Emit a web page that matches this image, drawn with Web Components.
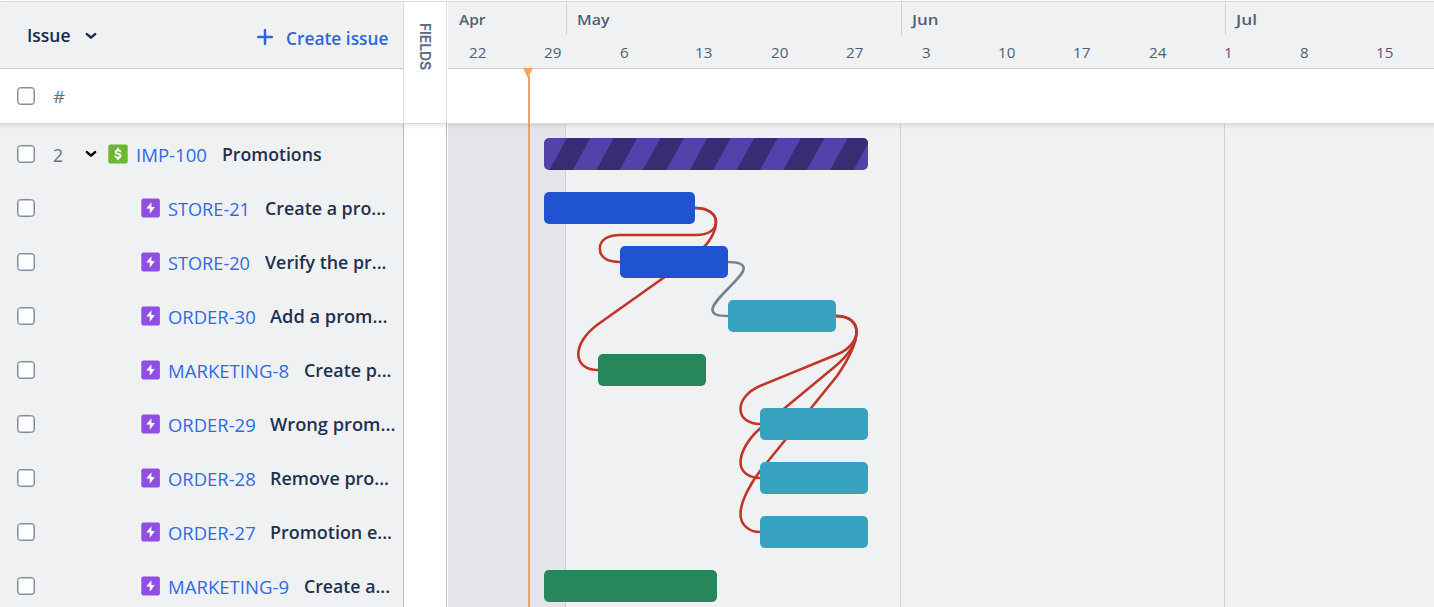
<!DOCTYPE html>
<html lang="en">
<head>
<meta charset="utf-8">
<title>Gantt</title>
<style>
html,body{margin:0;height:100%;overflow:hidden;background:#fff}
body{font-family:"Open Sans","Noto Sans",sans-serif;color:#172b4d}
</style>
</head>
<body>
<gantt-app></gantt-app>
<script>
const define = (name, html, extra = {}) => {
  const tpl = document.createElement('template');
  tpl.innerHTML = html;
  customElements.define(name, class extends HTMLElement {
    connectedCallback() {
      if (this.shadowRoot) return;
      this.attachShadow({mode: 'open'}).append(tpl.content.cloneNode(true));
      if (extra.ready) extra.ready.call(this, this.shadowRoot);
    }
  });
};

/* Text condensed or expanded to a given advance width. */
define('fit-text', `<style>
:host{display:block;flex:none;white-space:nowrap}
span{display:inline-block;transform-origin:0 50%}
</style><span><slot></slot></span>`, {ready(root) {
  const w = parseFloat(this.getAttribute('w'));
  this.style.width = w + 'px';
  const s = root.querySelector('span');
  s.style.transform = `scaleX(${w / s.getBoundingClientRect().width})`;
}});

define('check-box', `<style>
:host{display:block;flex:none;box-sizing:border-box;width:18px;height:18px;border:1px solid #7f8ba1;box-shadow:inset 0 0 0 .5px #8590a2;border-radius:3.5px;background:#fff}
</style>`);

define('chevron-icon', `<style>:host{display:block;flex:none;width:12px;height:8px}svg{display:block}</style>
<svg width="12" height="8" viewBox="0 0 12 8"><path d="M1.9 2.100 6 5.6 10.1 2.100" fill="none" stroke="currentColor" stroke-width="2.500" stroke-linecap="round" stroke-linejoin="round"/></svg>`);

define('plus-icon', `<style>:host{display:block;flex:none;width:16px;height:16px}svg{display:block}</style>
<svg width="16" height="16" viewBox="0 0 16 16"><path d="M8 1.200v13.600M1.200 8h13.600" fill="none" stroke="currentColor" stroke-width="2.500" stroke-linecap="round"/></svg>`);

define('epic-icon', `<style>:host{display:block;flex:none;width:19px;height:20px}svg{display:block}</style>
<svg width="19" height="20" viewBox="0 0 19 20"><rect x=".3" y=".4" width="18.6" height="19.2" rx="2" fill="#904ee2"/><path d="M10.4 4.2 5.2 10.5h3.6v5.2l5.1-6.6h-3.5z" fill="#fff"/></svg>`);

define('money-icon', `<style>:host{display:block;flex:none;width:20px;height:20px}svg{display:block}</style>
<svg width="20" height="20" viewBox="0 0 20 20"><rect x=".3" y=".4" width="19.4" height="19.2" rx="2" fill="#6ab82d"/><path d="M12.5 7.4C12 6.5 11.100 6.200 10 6.200 8.500 6.200 7.600 6.900 7.600 7.900c0 2.500 5 1.300 5 3.900 0 1.200-1.100 1.900-2.600 1.900-1.300 0-2.200-.5-2.700-1.500M10 4.500v1.700M10 13.700v1.700" fill="none" stroke="#fff" stroke-width="1.9" stroke-linecap="round"/></svg>`);

define('issue-row', `<style>
:host{display:flex;align-items:center;height:54px;padding-left:17px;font-size:18px;line-height:24px}
:host>*,div{flex:none}
.num{width:24px;margin-left:18px;color:#626f86}
.num fit-text{margin-top:2px}
.lead{display:flex;align-items:center;width:31px}
:host([child]) .lead{width:64px}
chevron-icon{color:#000;margin-left:8px}
.key{color:#2f6be6;margin:2px 14.600px 0 8px}
.title{font-weight:600;color:#22304f}
</style>
<check-box></check-box><div class="num"></div><div class="lead"></div><div class="icon"></div><div class="key"></div><div class="title"></div>`, {ready(root) {
  const a = n => this.getAttribute(n), $ = s => root.querySelector(s);
  const child = this.hasAttribute('child');
  if (!child) {
    $('.num').innerHTML = `<fit-text w="10">${a('num')}</fit-text>`;
    $('.lead').innerHTML = '<chevron-icon></chevron-icon>';
  }
  $('.icon').innerHTML = child ? '<epic-icon></epic-icon>' : '<money-icon></money-icon>';
  $('.key').innerHTML = `<fit-text w="${a('kw')}">${a('key')}</fit-text>`;
  $('.title').innerHTML = `<fit-text w="${a('tw')}">${a('name')}</fit-text>`;
}});

define('issue-panel', `<style>
:host{display:grid;grid-template-rows:66px 1px 54px 1px 1fr;background:#f0f1f3;min-height:0}
header{display:flex;align-items:flex-start;padding:0 14.500px 0 26px;border-top-left-radius:6px;font-weight:600;font-size:18px;line-height:24px}
.issue{margin-top:21px;margin-left:.5px}
header chevron-icon{margin:30px 0 0 15px;color:#172b4d}
.create{display:flex;align-items:center;gap:13.500px;margin:24px 0 0 auto;color:#2f65e0}
plus-icon{margin-top:-3px}
.line{background:#cdcfd8}
.sub{display:flex;align-items:center;background:#fff;padding-left:17px;font-size:16px;line-height:24px;color:#626f86}
.sub fit-text{margin:2px 0 0 18px}
.edge{background:#d9dbe1}
.rows{background:#f0f1f3;padding-top:3px;overflow:hidden}
</style>
<header><fit-text class="issue" w="43.500">Issue</fit-text><chevron-icon></chevron-icon>
<div class="create"><plus-icon></plus-icon><fit-text w="102.500">Create issue</fit-text></div></header>
<div class="line"></div>
<div class="sub"><check-box></check-box><fit-text w="12">#</fit-text></div>
<div class="edge"></div>
<div class="rows">
<issue-row num="2" key="IMP-100" kw="71" name="Promotions" tw="99.500"></issue-row>
<issue-row child key="STORE-21" kw="82" name="Create a pro..." tw="121"></issue-row>
<issue-row child key="STORE-20" kw="82" name="Verify the pr..." tw="121.500"></issue-row>
<issue-row child key="ORDER-30" kw="87.700" name="Add a prom..." tw="117.500"></issue-row>
<issue-row child key="MARKETING-8" kw="121" name="Create p..." tw="87.500"></issue-row>
<issue-row child key="ORDER-29" kw="87.700" name="Wrong prom..." tw="125.500"></issue-row>
<issue-row child key="ORDER-28" kw="87.700" name="Remove pro..." tw="119"></issue-row>
<issue-row child key="ORDER-27" kw="87.700" name="Promotion e..." tw="122"></issue-row>
<issue-row child key="MARKETING-9" kw="121" name="Create a..." tw="86"></issue-row>
</div>`);

define('fields-panel', `<style>
:host{display:grid;grid-template-rows:121px 1px 1fr;background:#fff;border:solid #c3c5cc;border-width:0 1px;border-image:linear-gradient(#dcdee3 122px,#b9bbc3 122px) 1}
.head{display:flex;justify-content:center;align-items:flex-start;padding-top:21px}
.label{writing-mode:vertical-rl;font:700 14px/18px Inter,"Open Sans",sans-serif;letter-spacing:-.15px;color:#626f86}
.edge{background:#d9dbe1}
</style><div class="head"><div class="label">FIELDS</div></div><div class="edge"></div>`);

define('time-header', `<style>
:host{display:grid;grid-template-rows:33px 33px;background:#f0f1f3;color:#505f79;font-size:15px;line-height:20px;overflow:hidden}
.months{display:flex;font-weight:600}
.m{flex:none;box-sizing:border-box;padding:7px 0 0 10px;border-left:1px solid #cfd1d9}
.m:first-child{border-left:0;padding-left:10.500px}
.days{display:flex;padding-left:20.500px}
.d{flex:none;width:75.600px;padding-top:7px}
</style>
<div class="months">
<div class="m" style="width:118px"><fit-text w="26.500">Apr</fit-text></div>
<div class="m" style="width:335px"><fit-text w="32.500">May</fit-text></div>
<div class="m" style="width:324px"><fit-text w="26.500">Jun</fit-text></div>
<div class="m" style="width:300px"><fit-text w="21">Jul</fit-text></div>
</div>
<div class="days"></div>`, {ready(root) {
  root.querySelector('.days').innerHTML = [22,29,6,13,20,27,3,10,17,24,1,8,15]
    .map(n => `<div class="d"><fit-text w="${String(n).length * 8.7}">${n}</fit-text></div>`).join('');
}});

/* A bar on the schedule canvas; x is its start, y its row, w its length. */
define('task-bar', `<style>
:host{display:block;position:absolute;box-sizing:border-box;height:32px;border-radius:5px;background:var(--c);overflow:hidden}
svg{display:block}
</style>`, {ready(root) {
  const w = +this.getAttribute('w');
  this.style.left = this.getAttribute('x') + 'px';
  this.style.top = 14 + 54 * this.getAttribute('row') + 'px';
  this.style.width = w + 'px';
  if (this.hasAttribute('striped')) {
    let d = '';
    for (let x = 5.3; x < w; x += 46.8) d += `M${x.toFixed(1)} 32l17.600-32h23.500l-17.600 32z`;
    root.innerHTML += `<svg width="${w}" height="32"><path d="${d}" fill="#382d75"/></svg>`;
  }
}});

define('time-canvas', `<style>
:host{display:block;position:relative;overflow:hidden;background:#f0f1f3}
.grid{display:flex;position:absolute;inset:0}
.grid i{flex:none;box-sizing:border-box;border-right:1px solid #cfd1d9}
.grid i:first-child{background:#e4e5e9}
svg{position:absolute;left:0;top:0}
</style>
<div class="grid"><i style="width:118px"></i><i style="width:335px"></i><i style="width:324px"></i></div>
<svg width="986" height="483" viewBox="448 124 986 483" fill="none" stroke-width="2.600" stroke="#c2362a">
<path d="M695 208C709 208 716 214.500 716 222 716 230 708 235 696 235H620C607 235 599.800 240.500 599.800 248.500 599.800 257 607 262 620 262"/>
<path d="M695 208C709 208 716 214.500 716 222 716 232 709 242 704 247L690 259 597 325C585 334 578.300 345 578.300 354 578.300 364 586 370 598 370"/>
<path stroke="#758195" d="M728 262C740 262 743.700 264.500 743.700 268.500 743.700 277.500 712.500 299.500 712.500 309.500 712.500 314.500 717 316 728 316"/>
<path d="M836 316C849 316 856.500 322 856.500 332 856.500 340 849 349.500 838 354L760 386C747 391.500 740.500 401 740.500 409 740.500 418.500 749 424 760 424"/>
<path d="M836 316C849 316 856.500 322 856.500 332 856.500 343 848 355.500 835 366.500L760 428.500C747 440 740.500 453 740.500 462.500 740.500 472 749 478 760 478"/>
<path d="M836 316C849 316 856.500 322 856.500 332 856.500 345 848 360 837 376L767 462.500C751 481 740.500 501 740.500 514 740.500 525 749 532 760 532"/>
</svg>
<task-bar striped x="96" row="0" w="324" style="--c:#5243aa"></task-bar>
<task-bar x="96" row="1" w="151" style="--c:#2053d0"></task-bar>
<task-bar x="172" row="2" w="108" style="--c:#2053d0"></task-bar>
<task-bar x="280" row="3" w="108" style="--c:#37a2c0"></task-bar>
<task-bar x="150" row="4" w="108" style="--c:#28875a"></task-bar>
<task-bar x="312" row="5" w="108" style="--c:#37a2c0"></task-bar>
<task-bar x="312" row="6" w="108" style="--c:#37a2c0"></task-bar>
<task-bar x="312" row="7" w="108" style="--c:#37a2c0"></task-bar>
<task-bar x="96" row="8" w="172.700" style="--c:#28875a"></task-bar>`);

define('time-panel', `<style>
:host{display:grid;grid-template-rows:66px 1px 54px 1px 1fr;position:relative;min-width:0;min-height:0}
.line{background:#cdcfd8}.edge{background:#d9dbe1}
.today{position:absolute;left:75px;top:66px;bottom:0;width:11px}
.today::before{content:"";position:absolute;left:0;top:0;border:solid transparent;border-width:10px 5px 0;border-top-color:#f8a157}
.today::after{content:"";position:absolute;left:5px;top:8px;bottom:0;width:2px;background:#f8a157}
</style>
<time-header></time-header><div class="line"></div><div></div><div class="edge"></div><time-canvas></time-canvas><div class="today"></div>`);

define('gantt-app', `<style>
:host{display:grid;grid-template-columns:403px 44px 1fr;grid-template-rows:1px 1fr;box-sizing:border-box;width:1434px;height:607px;padding-top:1px;position:relative;background:#fff}
.top{grid-column:1/-1;background:#d9dbe1;border-top-left-radius:5px}
time-panel{margin-left:1px}
.shade{position:absolute;left:0;right:0;top:124px;height:5px;background:linear-gradient(rgba(9,30,66,.09),rgba(9,30,66,0))}
</style>
<div class="top"></div><issue-panel></issue-panel><fields-panel></fields-panel><time-panel></time-panel><div class="shade"></div>`);
</script>
</body>
</html>
